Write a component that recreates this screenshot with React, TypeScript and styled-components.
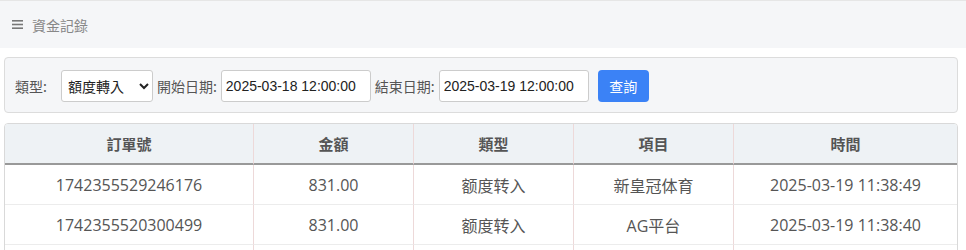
import React from "react";
import styled, { createGlobalStyle } from "styled-components";

const Global = createGlobalStyle`
  html, body { margin: 0; padding: 0; background: #fff; }
  body { font-family: "Open Sans", "Noto Sans CJK SC", sans-serif; }
  * { box-sizing: border-box; }
`;

const Header = styled.div`
  height: 48px;
  background: #f5f6f8;
  border-top: 1px solid #e6e6e6;
  display: flex;
  align-items: center;
  padding-left: 12px;
  font-family: "Noto Sans CJK TC", sans-serif;
  font-size: 14px;
  color: #888;
  gap: 9px;
`;

const Body = styled.div`
  padding: 9px 8px 0 4px;
`;

const Panel = styled.div`
  background: #f5f6f8;
  border: 1px solid #dcdcdc;
  border-radius: 4px;
  padding: 12px 10px 10px 10px;
  display: flex;
  align-items: center;
  height: 56px;
`;

const Label = styled.span<{ $ml?: number }>`
  font-family: "Noto Sans CJK TC", sans-serif;
  font-size: 14px;
  color: #555;
  margin-left: ${(p) => p.$ml ?? 4}px;
  margin-right: 4px;
  white-space: nowrap;
`;

const Select = styled.select`
  width: 92px;
  height: 32px;
  margin-left: 10px;
  border: 1px solid #ccc;
  border-radius: 3px;
  background: #fff;
  font-family: "Noto Sans CJK TC", sans-serif;
  font-size: 14px;
  color: #222;
  padding: 0 2px;
`;

const Input = styled.input`
  width: 150px;
  height: 32px;
  border: 1px solid #ccc;
  border-radius: 3px;
  background: #fff;
  font-family: "Liberation Sans", Arial, sans-serif;
  font-size: 14px;
  color: #222;
  padding: 0 4px;
`;

const Button = styled.button`
  margin-left: 9px;
  width: 51px;
  height: 32px;
  border: none;
  border-radius: 4px;
  background: #3b82f6;
  color: #fff;
  font-family: "Noto Sans CJK TC", sans-serif;
  font-size: 14px;
  cursor: pointer;
`;

const Table = styled.table`
  margin-top: 10px;
  width: 954px;
  border-collapse: separate;
  border-spacing: 0;
  border: 1px solid #d9d9d9;
  border-radius: 4px;
  overflow: hidden;
`;

const Th = styled.th<{ $w?: number }>`
  width: ${(p) => (p.$w ? `${p.$w}px` : "auto")};
  height: 41px;
  background: #eef2f5;
  color: #555;
  font-family: "Noto Sans CJK TC", sans-serif;
  font-size: 15px;
  font-weight: bold;
  text-align: center;
  border-bottom: 2px solid #999;
  border-left: 1px solid #edd9d9;
  padding: 0;
  &:first-child { border-left: none; }
`;

const Td = styled.td`
  height: 40px;
  text-align: center;
  color: #555;
  font-size: 16px;
  border-bottom: 1px solid #ececec;
  border-left: 1px solid #edd9d9;
  padding: 0;
  &:first-child { border-left: none; }
`;

const MenuIcon = () => (
  <svg width="11" height="11" viewBox="0 0 11 11">
    <rect x="0" y="1" width="11" height="1.6" fill="#777" />
    <rect x="0" y="4.7" width="11" height="1.6" fill="#777" />
    <rect x="0" y="8.4" width="11" height="1.6" fill="#777" />
  </svg>
);

const rows = [
  ["1742355529246176", "831.00", "额度转入", "新皇冠体育", "2025-03-19 11:38:49"],
  ["1742355520300499", "831.00", "额度转入", "AG平台", "2025-03-19 11:38:40"],
  ["1742355511428803", "831.00", "额度转入", "AG平台", "2025-03-19 11:38:31"],
];

export default function App() {
  return (
    <>
      <Global />
      <Header>
        <MenuIcon />
        <span>資金記錄</span>
      </Header>
      <Body>
        <Panel>
          <Label $ml={0}>類型:</Label>
          <Select defaultValue="in">
            <option value="in">額度轉入</option>
            <option value="out">額度轉出</option>
          </Select>
          <Label>開始日期:</Label>
          <Input defaultValue="2025-03-18 12:00:00" />
          <Label>結束日期:</Label>
          <Input defaultValue="2025-03-19 12:00:00" />
          <Button>查詢</Button>
        </Panel>
        <Table>
          <thead>
            <tr>
              <Th $w={248}>訂單號</Th>
              <Th $w={160}>金額</Th>
              <Th $w={160}>類型</Th>
              <Th $w={160}>項目</Th>
              <Th>時間</Th>
            </tr>
          </thead>
          <tbody>
            {rows.map((r) => (
              <tr key={r[0]}>
                {r.map((c, i) => (
                  <Td key={i}>{c}</Td>
                ))}
              </tr>
            ))}
          </tbody>
        </Table>
      </Body>
    </>
  );
}
